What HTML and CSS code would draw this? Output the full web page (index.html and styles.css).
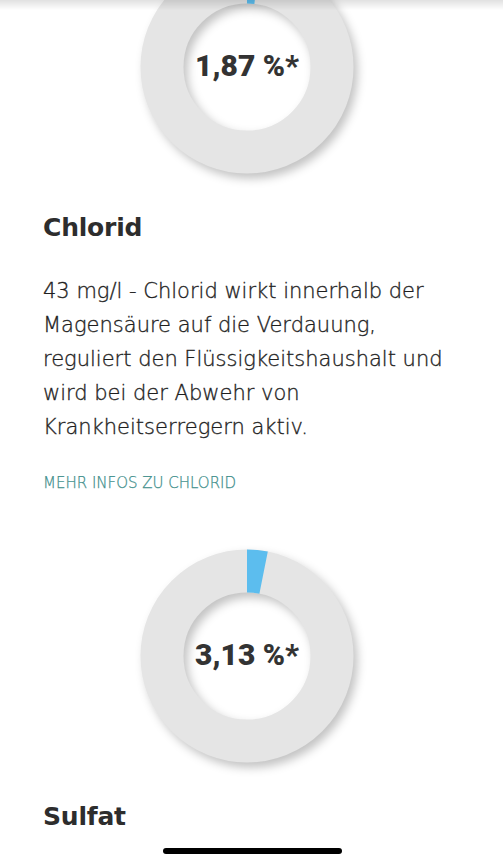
FILE: index.html
```html
<!DOCTYPE html>
<html lang="de">
<head>
<meta charset="UTF-8">
<meta name="viewport" content="width=device-width, initial-scale=1.0">
<title>Mineralstoffe</title>
  <link rel="stylesheet" href="styles.css">
</head>

<body>
  <div class="top-shade"></div>

  <main class="content">

    <section class="mineral mineral-first">
      <div class="donut">
        <svg class="donut-chart" viewBox="0 0 230 230" width="230" height="230">
          <circle class="donut-ring" cx="115" cy="115" r="85"></circle>
          <circle class="donut-part" cx="115" cy="115" r="85" stroke-dasharray="9.99 534.07" transform="rotate(-90 115 115)"></circle>
        </svg>
        <span class="donut-value">1,87 %*</span>
      </div>

      <h2 class="mineral-title">Chlorid</h2>
      <p class="mineral-text">43 mg/l - Chlorid wirkt innerhalb der Magensäure auf die Verdauung, reguliert den Flüssigkeitshaushalt und wird bei der Abwehr von Krankheitserregern aktiv.</p>
      <a class="mineral-link" href="#">MEHR INFOS ZU CHLORID</a>
    </section>

    <section class="mineral">
      <div class="donut">
        <svg class="donut-chart" viewBox="0 0 230 230" width="230" height="230">
          <circle class="donut-ring" cx="115" cy="115" r="85"></circle>
          <circle class="donut-part" cx="115" cy="115" r="85" stroke-dasharray="16.72 534.07" transform="rotate(-90 115 115)"></circle>
        </svg>
        <span class="donut-value">3,13 %*</span>
      </div>

      <h2 class="mineral-title">Sulfat</h2>
    </section>

  </main>

  <div class="home-bar"></div>
</body>
</html>
```

FILE: styles.css
```css
body {
  margin: 0;
  background-color: #fff;
  color: #1f1f1f;
  font-family: 'DejaVu Sans', sans-serif;
  height: 100vh;
  overflow: hidden;
}

/* shadow of the sticky header above */
.top-shade {
  position: fixed;
  top: 0;
  left: 0;
  width: 100%;
  height: 10px;
  background: linear-gradient(rgba(0, 0, 0, 0.12), rgba(0, 0, 0, 0));
  z-index: 2;
}

.content {
  padding: 0 52px 0 43px;
}

.mineral {
  display: flex;
  flex-direction: column;
  margin-top: 48px;
}

.mineral-first {
  margin-top: -48px;
}

.donut {
  position: relative;
  width: 230px;
  height: 230px;
  align-self: center;
}

.donut-chart {
  display: block;
  filter: drop-shadow(4px 5px 5px rgba(0, 0, 0, 0.24));
}

.donut-ring {
  fill: none;
  stroke: #e5e5e5;
  stroke-width: 43;
}

.donut-part {
  fill: none;
  stroke: #5cbdee;
  stroke-width: 43;
}

.donut-value {
  position: absolute;
  top: 0;
  left: 0;
  width: 100%;
  height: 100%;
  display: flex;
  align-items: center;
  justify-content: center;
  padding-bottom: 3px;
  box-sizing: border-box;
  font-family: 'Roboto', sans-serif;
  font-weight: 900;
  font-size: 30px;
  color: #333;
}

.mineral-title {
  margin: 30px 0 0 0;
  font-size: 25px;
  line-height: 32px;
  font-weight: 700;
  letter-spacing: -0.2px;
  color: #2d2d2d;
}

.mineral-text {
  margin: 30px 0 0 0;
  font-size: 21px;
  line-height: 34px;
  font-weight: 300;
  -webkit-text-stroke: 0.35px #1f1f1f;
}

.mineral-link {
  display: block;
  margin-top: 29px;
  font-size: 15px;
  line-height: 20px;
  font-weight: 300;
  color: #3f8f8c;
  -webkit-text-stroke: 0.25px #3f8f8c;
  text-decoration: none;
}

.home-bar {
  position: fixed;
  bottom: 9px;
  left: 50%;
  width: 179px;
  height: 6px;
  margin-left: -89px;
  border-radius: 3px;
  background-color: #000;
}
```
